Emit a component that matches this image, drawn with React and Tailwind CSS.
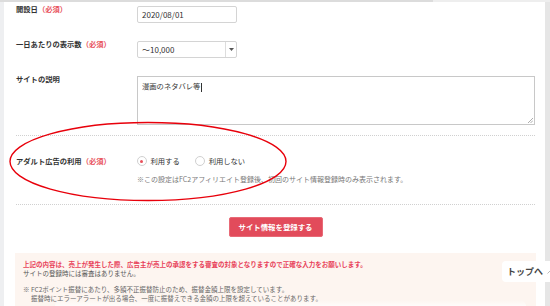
export default function App() {
  const label = "w-[121px] shrink-0 h-[12px] leading-[12px] text-[7.3px] font-bold text-[#333] whitespace-nowrap";
  const req = "text-[#e8505b]";
  return (
    <div className="relative w-[550px] h-[306px] overflow-hidden bg-[#eeeff1] font-['Noto_Sans_CJK_JP',sans-serif] text-[#333]">
      <div className="flex h-[2px]">
        <div className="w-[433px] bg-[#dcdcdc]" />
        <div className="flex-1 bg-[#eeeeee]" />
      </div>
      <div className="flex h-[304px]">
        <div className="w-[4px]" />
        <div className="flex-1 bg-white pl-[12px] pr-[10px] pt-[1px] flex flex-col">
          {/* row 1 */}
          <div className="flex items-start">
            <div className={label}>開設日<span className={req}>（必須）</span></div>
            <div className="mt-[3px] w-[100px] h-[17px] border border-[#d4d4d4] rounded-[2px] flex items-center pl-[4px] text-[8px] leading-none">2020/08/01</div>
          </div>
          {/* row 2 */}
          <div className="flex items-start mt-[15px]">
            <div className={label}>一日あたりの表示数<span className={req}>（必須）</span></div>
            <div className="mt-[3px] w-[100px] h-[17px] border border-[#d4d4d4] rounded-[2px] flex items-center text-[8px] leading-none">
              <div className="flex-1 pl-[4px]">〜10,000</div>
              <div className="w-[11px] h-full border-l border-[#dddddd] flex items-center justify-center">
                <svg width="5" height="3" viewBox="0 0 5 3"><path d="M0 0 L5 0 L2.5 3 Z" fill="#555" /></svg>
              </div>
            </div>
          </div>
          {/* row 3 */}
          <div className="flex items-start mt-[15px]">
            <div className={label}>サイトの説明</div>
            <div className="relative mt-[3px] w-[398px] h-[49px] border border-[#c8c8c8] pl-[4px] pt-[3px] text-[7.3px] leading-[12px]">
              漫画のネタバレ等<span className="inline-block w-px h-[9px] bg-[#333] align-middle ml-[1px]" />
              <svg className="absolute right-[1px] bottom-[1px]" width="5" height="5" viewBox="0 0 5 5">
                <path d="M5 0 L0 5 M5 2.5 L2.5 5" stroke="#999" strokeWidth="0.8" />
              </svg>
            </div>
          </div>
          <div className="mt-[10px] border-t border-dotted border-[#d0d0d0]" />
          {/* row 4 */}
          <div className="flex items-start mt-[19px]">
            <div className={label}>アダルト広告の利用<span className={req}>（必須）</span></div>
            <div className="flex flex-col">
              <div className="flex items-center h-[12px] gap-[15px] text-[7.3px] leading-[12px]">
                <div className="flex items-center gap-[4px]">
                  <span className="w-[10px] h-[10px] rounded-full border border-[#d0d0d0] flex items-center justify-center -ml-[0.5px]">
                    <span className="w-[3px] h-[3px] rounded-full bg-[#e8505b]" />
                  </span>
                  <span>利用する</span>
                </div>
                <div className="flex items-center gap-[4px]">
                  <span className="w-[10px] h-[10px] rounded-full border border-[#d0d0d0]" />
                  <span>利用しない</span>
                </div>
              </div>
              <div className="mt-[6px] h-[12px] leading-[12px] text-[7px] text-[#777] whitespace-nowrap">※この設定はFC2アフィリエイト登録後、初回のサイト情報登録時のみ表示されます。</div>
            </div>
          </div>
          <div className="mt-[19px] border-t border-dotted border-[#d0d0d0]" />
          {/* button */}
          <div className="flex justify-center mt-[12px]">
            <div className="w-[94px] h-[20px] bg-[#e24b5b] border border-[#e86a77] rounded-[2px] text-white text-[7.4px] font-bold flex items-center justify-center">サイト情報を登録する</div>
          </div>
          {/* notice */}
          <div className="relative mt-[16px] -ml-[1px] -mr-[1px] flex-1 bg-[#fdf5f0] pl-[8px] pt-[7px] text-[6.5px] leading-[9px] whitespace-nowrap">
            <div className="font-bold text-[#e8425a]">上記の内容は、売上が発生した際、広告主が売上の承認をする審査の対象となりますので正確な入力をお願いします。</div>
            <div className="text-[#555]">サイトの登録時には審査はありません。</div>
            <div className="mt-[7px] flex text-[#666]">
              <span className="w-[8px]">※</span>
              <div>
                <div>FC2ポイント振替にあたり、多額不正振替防止のため、振替金額上限を設定しています。</div>
                <div>振替時にエラーアラートが出る場合、一度に振替えできる金額の上限を超えていることがあります。</div>
              </div>
            </div>
            <div className="absolute left-[40px] right-[10px] bottom-0 h-[6px] rounded-t-full bg-gradient-to-b from-transparent to-white/70" />
          </div>
        </div>
        <div className="w-[5px] bg-[#e6e6e6]" />
      </div>

      {/* red ellipse annotation */}
      <svg className="absolute left-0 top-0 pointer-events-none" width="550" height="306" viewBox="0 0 550 306">
        <ellipse cx="148" cy="161.5" rx="138" ry="39" fill="none" stroke="#e8000b" strokeWidth="1.4" />
      </svg>

      {/* top button */}
      <div className="absolute left-[502px] top-[261px] w-[60px] h-[21px] bg-white rounded-[4px] flex items-center pl-[5px] gap-[4px] text-[9px] font-bold text-[#444] leading-none">
        <span>トップへ</span>
        <svg width="6" height="4" viewBox="0 0 6 4"><path d="M0.5 3.5 L3 1 L5.5 3.5" stroke="#aaa" strokeWidth="0.8" fill="none" /></svg>
      </div>
    </div>
  );
}
